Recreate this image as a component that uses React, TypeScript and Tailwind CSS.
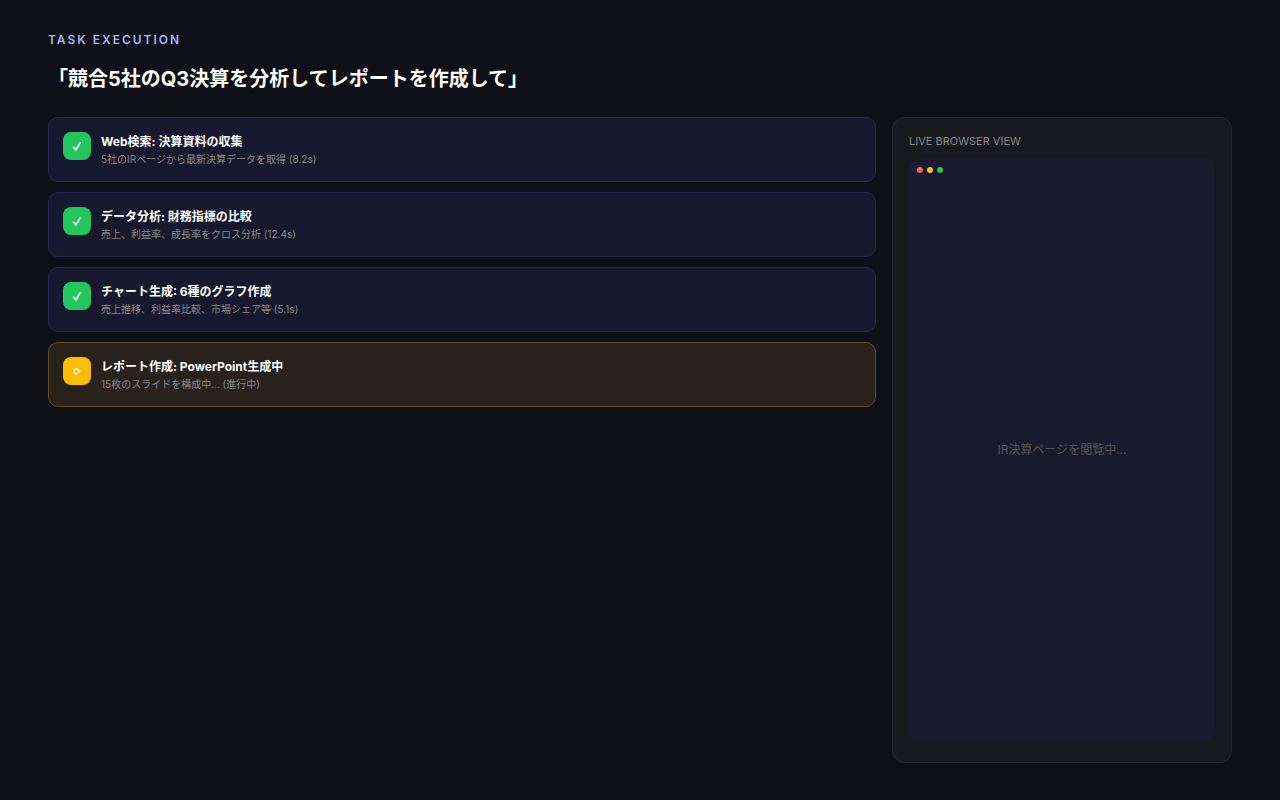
import clsx from "clsx";

type Step = {
  title: string;
  detail: string;
  status: "done" | "running";
};

const STEPS: Step[] = [
  { title: "Web検索: 決算資料の収集", detail: "5社のIRページから最新決算データを取得 (8.2s)", status: "done" },
  { title: "データ分析: 財務指標の比較", detail: "売上、利益率、成長率をクロス分析 (12.4s)", status: "done" },
  { title: "チャート生成: 6種のグラフ作成", detail: "売上推移、利益率比較、市場シェア等 (5.1s)", status: "done" },
  { title: "レポート作成: PowerPoint生成中", detail: "15枚のスライドを構成中... (進行中)", status: "running" },
];

function CheckIcon() {
  return (
    <svg viewBox="0 0 14 14" className="h-3.5 w-3.5" fill="none" stroke="currentColor" aria-hidden="true">
      <path d="M3.2 7.8 5.9 10.8 10.6 3.2" strokeWidth="1.6" />
    </svg>
  );
}

function SpinnerIcon() {
  return (
    <svg viewBox="0 0 14 14" className="h-3.5 w-3.5" fill="none" stroke="currentColor" aria-hidden="true">
      <path d="M8.1 9.2A2.4 2.4 0 1 1 8.9 7" strokeWidth="1.3" />
      <path d="M6.9 6.6H10.9L8.9 9Z" fill="currentColor" stroke="none" />
    </svg>
  );
}

function StepCard({ step }: { step: Step }) {
  const running = step.status === "running";
  return (
    <li
      className={clsx(
        "flex items-start gap-2.5 rounded-[10px] border p-3.5",
        running ? "border-[#664d1b] bg-[#28211c]" : "border-[#262654] bg-[#17172d]",
      )}
    >
      <span
        className={clsx(
          "flex h-7 w-7 shrink-0 items-center justify-center rounded-lg text-white",
          running ? "bg-[#fbbc05]" : "bg-[#22c55e]",
        )}
      >
        {running ? <SpinnerIcon /> : <CheckIcon />}
      </span>
      <div className="min-w-0">
        <h2 className="text-[12px] leading-5 font-bold text-white">{step.title}</h2>
        <p className="text-[10px] leading-[15px] text-[#888888]">{step.detail}</p>
      </div>
    </li>
  );
}

function BrowserView() {
  return (
    <aside className="flex w-[340px] shrink-0 flex-col rounded-xl border border-[#27272e] bg-[#18181f] px-4 pt-4 pb-[21px]">
      <h2 className="mb-2.5 text-[11px] leading-[15px] text-[#888888]">LIVE BROWSER VIEW</h2>
      <div className="relative flex flex-1 items-center justify-center rounded-lg bg-[#1a1a2e]">
        <div className="absolute top-2 left-2 flex gap-1">
          <span className="h-1.5 w-1.5 rounded-full bg-[#ff5f57]" />
          <span className="h-1.5 w-1.5 rounded-full bg-[#febc2e]" />
          <span className="h-1.5 w-1.5 rounded-full bg-[#28c840]" />
        </div>
        <p className="text-[12px] leading-5 text-[#555555]">IR決算ページを閲覧中...</p>
      </div>
    </aside>
  );
}

export default function App() {
  return (
    <main className="flex min-h-screen flex-col bg-[#0f0f17] px-12 pt-8 pb-[37px] font-['Inter','Noto_Sans_CJK_JP',sans-serif] text-white">
      <header className="mb-[23px]">
        <p className="text-[12px] leading-4 font-semibold tracking-[2px] text-[#a5b4fc]">TASK EXECUTION</p>
        <h1 className="mt-4 text-[20px] leading-[30px] font-bold">「競合5社のQ3決算を分析してレポートを作成して」</h1>
      </header>
      <div className="flex flex-1 gap-4">
        <ul className="flex min-w-0 flex-1 flex-col gap-2.5">
          {STEPS.map((step) => (
            <StepCard key={step.title} step={step} />
          ))}
        </ul>
        <BrowserView />
      </div>
    </main>
  );
}
